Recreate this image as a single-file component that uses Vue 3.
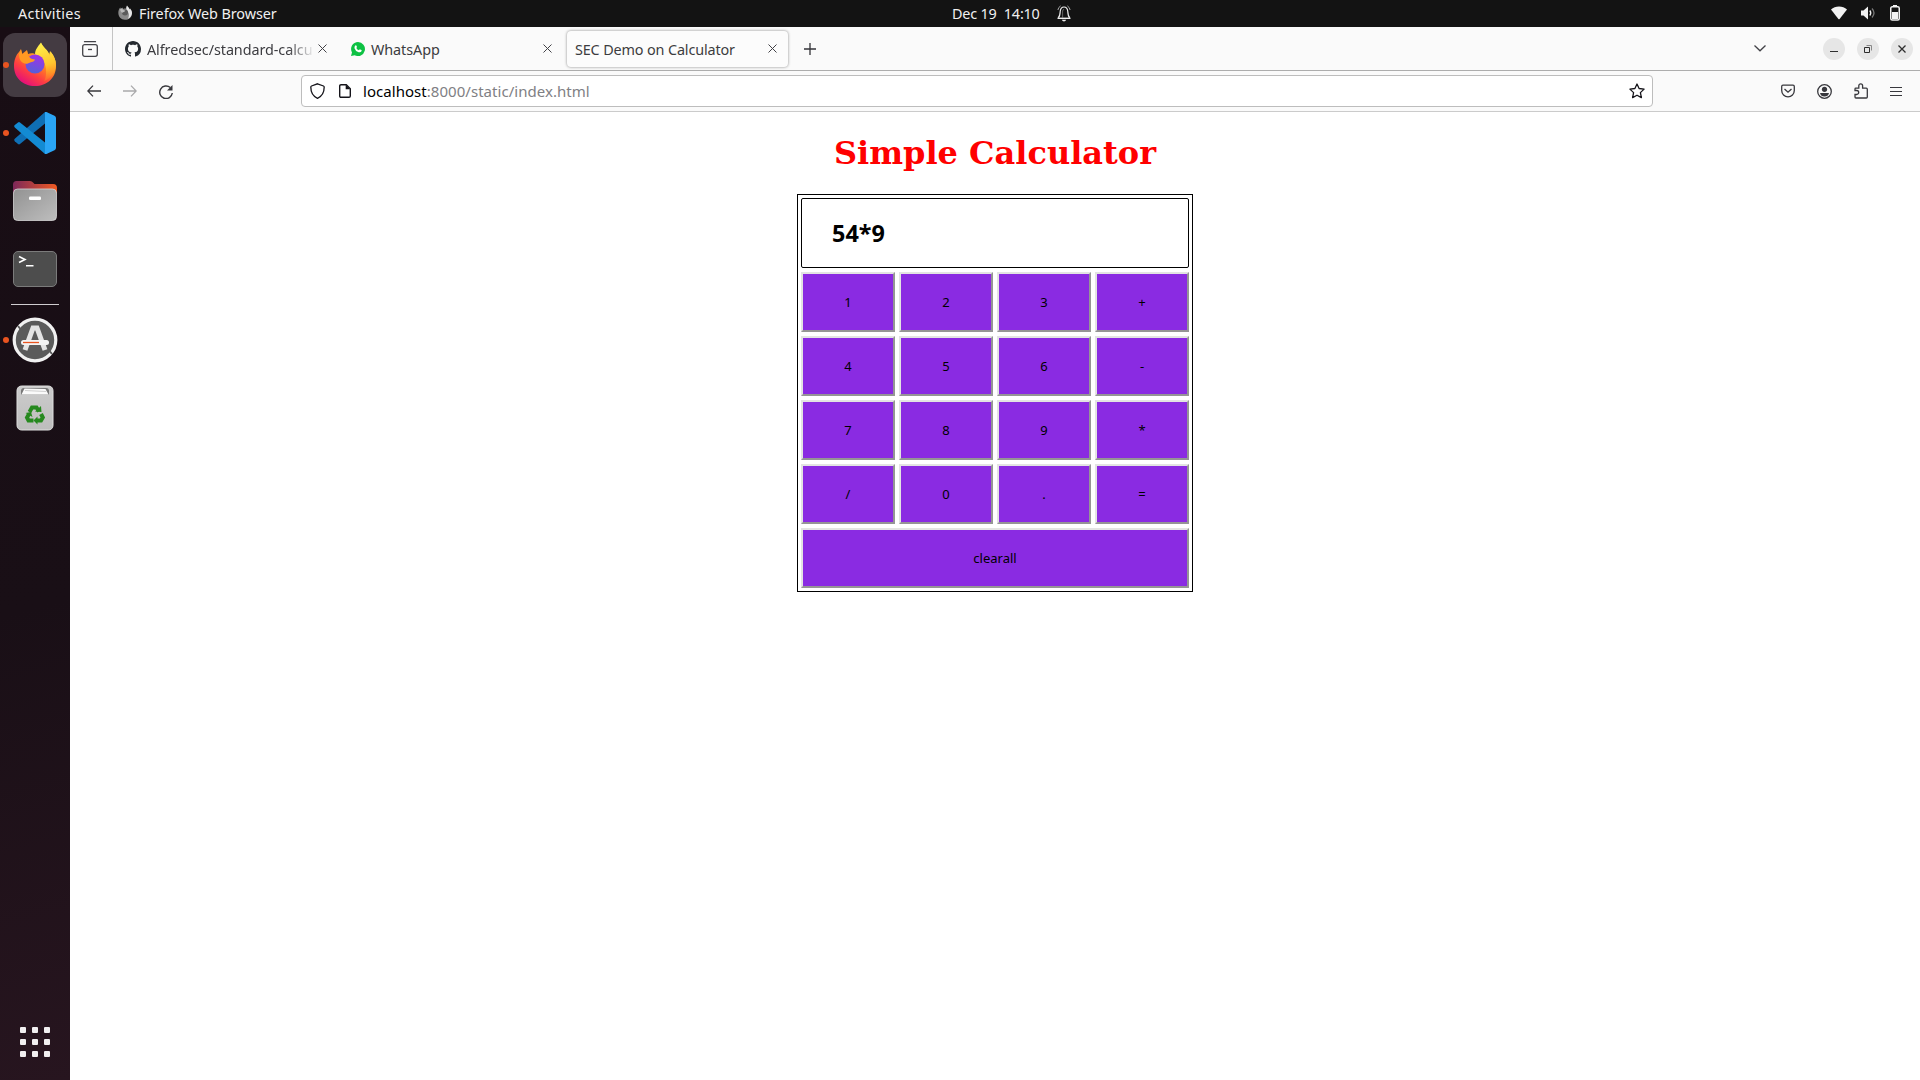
<script setup>
import { ref } from 'vue'

const display = ref('54*9')
const keys = ['1', '2', '3', '+', '4', '5', '6', '-', '7', '8', '9', '*', '/', '0', '.', '=']

function press(key) {
  display.value += key
}
function clearAll() {
  display.value = ''
}
</script>

<template>
  <div class="desktop">
    <header class="topbar">
      <span class="activities">Activities</span>
      <svg class="app-icon" width="14" height="15" viewBox="0 0 42 44">
        <path fill="#8b8b8b" d="M1 23C1 17 3 12 6 8l1-1 1 5 5-5 1 5c3-2 6-2 9-1l4-10c2 5 6 6 8 12l1-3c4 5 6 9 6 14 0 12-9 20-21 20S1 35 1 23z" />
        <path fill="#e6e6e6" d="M27 1c2 5 6 6 8 12l1-3c4 5 6 9 6 14-1 8-6 14-12 17 4-9 4-17-1-22-4-4-5-10-2-18z" />
        <circle cx="21" cy="22" r="9" fill="#5b5b5b" />
        <path fill="#b9b9b9" d="M6 8l2 4 5-4 1 5c3 2 5 3 8 3-2 5-7 4-8 7-4 0-8-5-8-15z" />
      </svg>
      <span class="app-name">Firefox Web Browser</span>
      <div class="clock">
        <span class="clock-text">Dec 19&nbsp; 14:10</span>
        <svg class="bell" width="14" height="17" viewBox="0 0 14 17" fill="none" stroke="#eee" stroke-width="1.2">
          <path d="M1.200 12.800C3 11.500 3 9.500 3.200 6.500 3.500 3.500 5 2 7 2s3.500 1.500 3.800 4.500c.2 3 .2 5 2 6.300" />
          <path d="M5.600 12.500V6q.2-1.600 1.400-1.600" stroke="#777" stroke-width=".8" />
          <path d="M3.600.9Q1.300 2.300.9 5M10.400.9q2.300 1.400 2.700 4.100" stroke="#aaa" stroke-width="1" />
          <path d="M.5 13.300h13" stroke-width="1.400" />
          <path d="M4.800 14.700h4.400q-.6 1.800-2.200 1.800t-2.200-1.800z" fill="#eee" stroke="none" />
        </svg>
      </div>
      <div class="status">
        <svg width="16" height="14" viewBox="0 0 16 14"><path d="M0 3.500C4-.5 12-.5 16 3.500L8.600 13q-.6.6-1.200 0z" fill="#f2f2f2" /></svg>
        <svg width="15" height="14" viewBox="0 0 15 14" fill="none">
          <path d="M0 4.500h2.500L7 .5v13L2.500 9.500H0z" fill="#f2f2f2" />
          <path d="M8.800 4.500q2 2.500 0 5" stroke="#f2f2f2" stroke-width="1.300" />
          <path d="M11 2.500q4 4.500 0 9" stroke="#777" stroke-width="1.300" />
        </svg>
        <svg width="10" height="16" viewBox="0 0 10 16">
          <path d="M3 0h4v2H3z" fill="#f2f2f2" />
          <rect x=".75" y="1.750" width="8.500" height="13.300" rx="1.500" fill="none" stroke="#f2f2f2" stroke-width="1.500" />
          <path d="M2 7h6v7H2z" fill="#f2f2f2" />
        </svg>
      </div>
    </header>

    <div class="body">
      <nav class="dock">
        <div class="dock-item active running">
          <svg class="firefox" width="42" height="44" viewBox="0 0 42 44">
            <defs>
              <linearGradient id="fxBody" x1=".8" y1=".1" x2=".25" y2=".95">
                <stop offset="0" stop-color="#ffd83a" />
                <stop offset=".4" stop-color="#ff8a1f" />
                <stop offset=".7" stop-color="#ff4040" />
                <stop offset="1" stop-color="#e4107a" />
              </linearGradient>
              <linearGradient id="fxTail" x1=".3" y1="0" x2=".5" y2="1">
                <stop offset="0" stop-color="#fff24c" />
                <stop offset=".6" stop-color="#ffc52e" />
                <stop offset="1" stop-color="#ff8a26" stop-opacity=".3" />
              </linearGradient>
              <linearGradient id="fxGlobe" x1=".7" y1="0" x2=".4" y2="1">
                <stop offset="0" stop-color="#a42fe8" />
                <stop offset="1" stop-color="#5460d8" />
              </linearGradient>
            </defs>
            <path fill="url(#fxBody)" d="M0 24C0 18 2 13 5 10l2-3 1 5 5-4 1 4c3-1 6-1 9 1L27 1c2 5 6 6 8 12l1-4c4 5 6 9 6 15 0 12-9 20-21 20S0 36 0 24z" />
            <path fill="url(#fxTail)" d="M27 .5c2 5 7 7 9 13l.5-4c4 5 5.500 9 5.500 14-1 8-5 12-12 16 3-5 3-15-1-21-2-3-4-5-8-6 0-5 3-8 6-12z" />
            <circle cx="21" cy="22" r="9.500" fill="url(#fxGlobe)" />
            <path fill="#ff9a22" d="M5 12l2-4.500 1.500 5L13 9l1 4.500c2 2.500 3 3.500 7 4-1 3-5 2.500-7 4-5 1-9-2-9-9.500z" />
          </svg>
        </div>
        <div class="dock-item running">
          <svg width="42" height="42" viewBox="0 0 42 42">
            <path d="M31 0v11.500L6 32q-1 .8-2 0L.8 29.200q-1.200-1.200 0-2.400z" fill="#0f6fb5" />
            <path d="M31 42V30.500L6 10.500q-1-.8-2 0L.8 13q-1.200 1.200 0 2.400z" fill="#138bd3" />
            <path d="M31 0v42q1.500.3 3-.7l6.500-3q1.500-.8 1.500-2.300V6q0-1.500-1.500-2.300L34 .7q-1.500-1-3-.7z" fill="#2aa5f5" />
          </svg>
        </div>
        <div class="dock-item">
          <svg width="44" height="40" viewBox="0 0 44 40">
            <defs>
              <linearGradient id="folderBack"><stop offset="0" stop-color="#7c2859" /><stop offset="1" stop-color="#f05a22" /></linearGradient>
              <linearGradient id="folderFront" x2="1" y2="1"><stop offset="0" stop-color="#929292" /><stop offset="1" stop-color="#bebebe" /></linearGradient>
            </defs>
            <path d="M0 12V3.500Q0 0 3.500 0H17q2 0 3 1.500L21.500 3H40q4 0 4 4v5z" fill="url(#folderBack)" />
            <rect x=".5" y="8" width="43" height="31.500" rx="4" fill="url(#folderFront)" stroke="#d5d5d5" stroke-width=".8" />
            <rect x="16" y="15.500" width="12" height="3.500" rx="1.300" fill="#fff" />
          </svg>
        </div>
        <div class="dock-item">
          <svg width="44" height="36" viewBox="0 0 44 36">
            <rect x=".5" y=".5" width="43" height="35" rx="4.500" fill="#4d4d4d" stroke="#7b7b7b" />
            <path d="m6 5.500 6 3-6 3M13 14.700h7.500" fill="none" stroke="#fff" stroke-width="1.600" />
          </svg>
        </div>
        <div class="dock-separator"></div>
        <div class="dock-item running software">
          <svg width="46" height="46" viewBox="0 0 46 46">
            <circle cx="23" cy="23" r="21.500" fill="#5b5b5b" />
            <circle cx="23" cy="23" r="20.800" fill="none" stroke="#f1f1f1" stroke-width="3.200" />
            <path d="m6 9 4 5M40 37l-4-5" stroke="#5b5b5b" stroke-width="2" />
            <path d="m13 33 8-22h4l8 22" fill="none" stroke="#e4e4e4" stroke-width="5" />
            <rect x="9" y="23" width="28" height="5" rx="2.500" fill="#f4f4f4" />
            <path d="M11 25.500h16" stroke="#e95420" stroke-width="1.300" />
          </svg>
        </div>
        <div class="dock-item trash">
          <svg width="38" height="46" viewBox="0 0 38 46">
            <defs><linearGradient id="bin" x2="0" y2="1"><stop offset="0" stop-color="#cccccc" /><stop offset="1" stop-color="#bdbdbd" /></linearGradient></defs>
            <rect x="1" y="1" width="36" height="44" rx="4.500" fill="url(#bin)" stroke="#dedede" />
            <path d="M5 9.500V6q0-3 3-3h22q3 0 3 3v3.500z" fill="#777" />
            <path d="m5.500 9.500 3-6 21 .5 3 5.500z" fill="#fafafa" />
            <path d="M9 5.500l21 1" stroke="#bbb" stroke-width=".7" />
            <g fill="none" stroke="#26891f" stroke-width="4">
              <path d="m13.500 27 2.500-4.500h4.500l2.500 4" />
              <path d="m25 29 1.800 3.500-1.800 3H21" />
              <path d="M17.500 35.500h-5l-1.500-3 2-3.500" />
            </g>
            <path d="m19 26.500 6.500.5-.5-6zM21.500 31.500l-4 4 4 4zM9.500 28l5.500-1 1.500 5z" fill="#26891f" />
          </svg>
        </div>
        <div class="app-grid"><i v-for="n in 9" :key="n"></i></div>
      </nav>

      <main class="browser">
        <div class="tabbar">
          <div class="view-button">
            <svg width="16" height="16" viewBox="0 0 16 16" fill="none" stroke="#424247" stroke-width="1.300">
              <path d="M2.500.7h11" stroke-linecap="round" /><rect x=".7" y="3.700" width="14.600" height="11.600" rx="2" /><path d="M6 8.500h4" />
            </svg>
          </div>
          <div class="tab tab-github">
            <svg class="favicon" width="16" height="16" viewBox="0 0 16 16"><path fill="#24292f" d="M8 0C3.580 0 0 3.580 0 8c0 3.540 2.290 6.530 5.470 7.590.4.070.55-.17.55-.38 0-.19-.01-.82-.01-1.490-2.010.37-2.530-.49-2.690-.94-.09-.23-.48-.94-.82-1.130-.28-.15-.68-.52-.01-.53.63-.01 1.080.58 1.230.82.72 1.210 1.870.87 2.330.66.07-.52.28-.87.51-1.070-1.780-.2-3.640-.89-3.640-3.950 0-.87.31-1.590.82-2.150-.08-.2-.36-1.020.08-2.120 0 0 .67-.21 2.200.82.64-.18 1.320-.27 2-.27s1.360.09 2 .27c1.530-1.040 2.200-.82 2.200-.82.44 1.100.16 1.920.08 2.120.51.56.82 1.270.82 2.150 0 3.070-1.870 3.750-3.650 3.950.29.25.54.73.54 1.480 0 1.070-.01 1.930-.01 2.200 0 .21.15.46.55.38A8.010 8.010 0 0 0 16 8c0-4.420-3.580-8-8-8z" /></svg>
            <span class="tab-title faded">Alfredsec/standard-calcu</span>
            <svg class="close" width="9" height="9" viewBox="0 0 9 9"><path d="m.5.5 8 8m0-8-8 8" stroke="#424247" stroke-width="1" /></svg>
          </div>
          <div class="tab tab-whatsapp">
            <svg class="favicon" width="14" height="14" viewBox="0 0 14 14">
              <path d="M7 0a7 7 0 1 1-3.300 13.200L0 14l1-3.500A7 7 0 0 1 7 0z" fill="#0dc143" />
              <path d="M4.300 3.400q.8-.6 1.200.3l.5 1.200-.7 1q.9 1.700 2.600 2.400l.9-1 1.600.8q.5.3.2 1-.9 1.700-3 1.100Q4.300 9.100 3.500 6.200q-.3-1.800.8-2.800z" fill="#fff" />
            </svg>
            <span class="tab-title">WhatsApp</span>
            <svg class="close" width="9" height="9" viewBox="0 0 9 9"><path d="m.5.5 8 8m0-8-8 8" stroke="#424247" stroke-width="1" /></svg>
          </div>
          <div class="tab tab-active">
            <span class="tab-title sec">SEC Demo on Calculator</span>
            <svg class="close" width="9" height="9" viewBox="0 0 9 9"><path d="m.5.5 8 8m0-8-8 8" stroke="#424247" stroke-width="1" /></svg>
          </div>
          <svg class="new-tab" width="12" height="12" viewBox="0 0 12 12"><path d="M6 0v12M0 6h12" stroke="#333338" stroke-width="1.300" /></svg>
          <div class="window-tools">
            <svg width="12" height="7" viewBox="0 0 12 7"><path d="m.5.5 5.500 5.300L11.500.5" fill="none" stroke="#424247" stroke-width="1.300" /></svg>
            <div class="window-buttons">
              <span class="wbtn"><svg width="10" height="10" viewBox="0 0 10 10"><path d="M1 7.500h8" stroke="#2e2e2e" /></svg></span>
              <span class="wbtn"><svg width="10" height="10" viewBox="0 0 10 10" fill="none"><path d="M3.500 1.500h5v5" stroke="#888" /><path d="M1.500 3.500h5v5h-5z" stroke="#2e2e2e" /></svg></span>
              <span class="wbtn"><svg width="10" height="10" viewBox="0 0 10 10"><path d="m1.500 1.500 7 7m0-7-7 7" stroke="#2e2e2e" stroke-width="1.300" /></svg></span>
            </div>
          </div>
        </div>

        <div class="navbar">
          <div class="nav-buttons">
            <svg width="14" height="12" viewBox="0 0 14 12" fill="none" stroke="#38383d" stroke-width="1.300"><path d="M14 6H1M6 .6.8 6 6 11.400" /></svg>
            <svg width="14" height="12" viewBox="0 0 14 12" fill="none" stroke="#a9a9ab" stroke-width="1.300"><path d="M0 6h13M8 .6 13.200 6 8 11.400" /></svg>
            <svg class="reload" width="14" height="14" viewBox="0 0 14 14"><path d="M11.300 2.600A6.300 6.300 0 1 0 13.300 8" fill="none" stroke="#38383d" stroke-width="1.400" /><path d="M13.500 0v5.500H8z" fill="#38383d" /></svg>
          </div>
          <div class="urlbar">
            <svg class="shield" width="15" height="16" viewBox="0 0 15 16"><path d="M7.500.8 13.500 3q.7.300.7 1c0 5.500-2.200 9.300-6.700 11.300C3 13.300.8 9.500.8 4q0-.7.7-1z" fill="none" stroke="#15141a" stroke-width="1.300" /></svg>
            <svg class="page" width="12" height="14" viewBox="0 0 12 14"><path d="M.7 2q0-1.300 1.300-1.300h5.300l4 4V12q0 1.300-1.300 1.300H2Q.7 13.300.7 12z" fill="none" stroke="#15141a" stroke-width="1.400" /><path d="M6.700.7v4.600h4.600z" fill="#15141a" /></svg>
            <span class="url"><b>localhost</b>:8000/static/index.html</span>
            <svg class="star" width="16" height="16" viewBox="0 0 16 16"><path d="m8 1 2.100 4.500 5 .6-3.700 3.500 1 5L8 12.200l-4.400 2.400 1-5L.9 6.100l5-.6z" fill="none" stroke="#15141a" stroke-width="1.300" stroke-linejoin="round" /></svg>
          </div>
          <div class="nav-tools">
            <svg width="14" height="14" viewBox="0 0 14 14" fill="none" stroke="#38383d" stroke-width="1.300"><path d="M2 1.200h10q1.300 0 1.300 1.300V6.500a6.300 6.300 0 0 1-12.600 0V2.500Q.7 1.200 2 1.200z" /><path d="m3.500 5 3.500 3.200L10.500 5" /></svg>
            <svg width="15" height="15" viewBox="0 0 15 15"><circle cx="7.500" cy="7.500" r="6.800" fill="none" stroke="#38383d" stroke-width="1.300" /><circle cx="7.500" cy="5.300" r="2.600" fill="#38383d" /><path d="M3 9h9q-.8 3.500-4.500 3.500T3 9z" fill="#38383d" /></svg>
            <svg width="14" height="16" viewBox="0 0 14 16"><path d="M1 7.500V6q0-.8.8-.8h3V2.700a1.900 1.900 0 0 1 3.800 0v2.500h3.700q1 0 1 1V14q0 1-1 1H2q-1 0-1-1v-2.500h1.700a2 2 0 0 0 0-4z" fill="none" stroke="#38383d" stroke-width="1.300" /></svg>
            <svg width="12" height="11" viewBox="0 0 12 11"><path d="M0 1.500h12M0 5.500h12M0 9.500h12" stroke="#38383d" stroke-width="1.200" /></svg>
          </div>
        </div>

        <section class="page-content">
          <h1>Simple Calculator</h1>
          <div class="calculator">
            <div class="display">{{ display }}</div>
            <div class="keys">
              <button v-for="key in keys" :key="key" @click="press(key)">{{ key }}</button>
              <button class="clear" @click="clearAll">clearall</button>
            </div>
          </div>
        </section>
      </main>
    </div>
  </div>
</template>

<style>
body {
  margin: 0;
  overflow: hidden;
}
</style>

<style scoped>
* {
  box-sizing: border-box;
}
svg {
  display: block;
  flex: none;
}
.desktop {
  width: 1920px;
  height: 1080px;
  display: flex;
  flex-direction: column;
  font-family: "Noto Sans", "Open Sans", sans-serif;
  font-size: 14.4px;
  white-space: nowrap;
}
.topbar {
  height: 27px;
  flex: none;
  background: #131313;
  color: #f0f0f0;
  display: flex;
  align-items: center;
  padding-left: 18px;
}
.activities {
  width: 100px;
  letter-spacing: 0.3px;
}
.app-icon {
  margin-top: -2px;
}
.app-name {
  margin-left: 7px;
  letter-spacing: -0.08px;
  width: 813px;
}
.clock {
  display: flex;
  align-items: center;
}
.clock-text {
  width: 105px;
  letter-spacing: -0.18px;
}
.bell {
  margin-top: -1px;
}
.status {
  margin-left: auto;
  display: flex;
  align-items: center;
  gap: 14px;
  padding-right: 20px;
  margin-top: -1px;
}
.body {
  flex: 1;
  display: flex;
  min-height: 0;
}
.dock {
  width: 70px;
  flex: none;
  background: linear-gradient(165deg, #180d14 0%, #190f16 55%, #27151f 100%);
  display: flex;
  flex-direction: column;
  align-items: center;
  padding-top: 6px;
}
.dock-item {
  position: relative;
  width: 64px;
  height: 64px;
  margin-bottom: 4px;
  display: flex;
  align-items: center;
  justify-content: center;
  flex: none;
}
.dock-item.active {
  background: #443b42;
  border-radius: 12px;
}
.firefox {
  margin-bottom: 2px;
}
.dock-item.running::before {
  content: "";
  position: absolute;
  left: 0;
  top: 29px;
  width: 6px;
  height: 6px;
  border-radius: 50%;
  background: #e95420;
}
.dock-separator {
  width: 48px;
  height: 1px;
  background: #cfcccf;
  margin: -1px 0 3px;
  flex: none;
}
.app-grid {
  margin-top: auto;
  margin-bottom: 23px;
  display: grid;
  grid-template-columns: repeat(3, 6px);
  gap: 6px;
}
.app-grid i {
  height: 6px;
  border-radius: 1px;
  background: #f1eff0;
}
.browser {
  flex: 1;
  min-width: 0;
  display: flex;
  flex-direction: column;
  background: #fff;
}
.tabbar {
  height: 44px;
  flex: none;
  background: #fafafa;
  border-bottom: 1px solid #adadad;
  display: flex;
  align-items: center;
  color: #3c3c40;
}
.view-button {
  width: 43px;
  height: 43px;
  border-right: 1px solid #c4c4c4;
  display: flex;
  align-items: center;
  padding: 1px 0 0 12px;
}
.tab {
  height: 36px;
  display: flex;
  align-items: center;
}
.tab-github {
  width: 226px;
  padding: 0 12px 0 12px;
}
.tab-whatsapp {
  width: 228px;
  padding: 0 15px 0 12px;
}
.tab-active {
  width: 221px;
  padding: 0 11px 0 8px;
  border-radius: 4px;
  background: #fcfcfc;
  box-shadow: 0 0 3px rgba(0, 0, 0, 0.45);
}
.tab-title {
  margin-left: 6px;
  padding-top: 2px;
  letter-spacing: -0.08px;
}
.tab-title.sec {
  margin-left: 0;
  letter-spacing: -0.14px;
}
.tab-title.faded {
  width: 168px;
  overflow: hidden;
  -webkit-mask-image: linear-gradient(90deg, #000 84%, transparent 100%);
  mask-image: linear-gradient(90deg, #000 84%, transparent 100%);
}
.tab .close {
  margin-left: auto;
}
.tab-github .close {
  margin-left: 3px;
}
.new-tab {
  margin: 1px 0 0 16px;
}
.window-tools {
  margin-left: auto;
  display: flex;
  align-items: center;
  gap: 57px;
  padding-right: 7px;
}
.window-buttons {
  display: flex;
  gap: 12px;
}
.wbtn {
  width: 22px;
  height: 22px;
  border-radius: 50%;
  background: #e6e6e6;
  display: flex;
  align-items: center;
  justify-content: center;
}
.navbar {
  height: 41px;
  flex: none;
  background: #fafafa;
  border-bottom: 1px solid #cbcbcb;
  display: flex;
  align-items: center;
}
.nav-buttons {
  width: 231px;
  display: flex;
  align-items: center;
  gap: 22px;
  padding-left: 17px;
}
.reload {
  margin-top: 2px;
}
.urlbar {
  width: 1352px;
  height: 32px;
  background: #fff;
  border: 1px solid #bdbdbd;
  border-radius: 4px;
  display: flex;
  align-items: center;
  padding: 0 7px 0 8px;
  font-size: 15px;
  color: #808084;
}
.page {
  margin-left: 14px;
}
.url {
  margin-left: 12px;
  letter-spacing: 0.04px;
}
.url b {
  font-weight: 400;
  color: #000;
}
.star {
  margin-left: auto;
}
.nav-tools {
  margin-left: auto;
  padding-right: 18px;
  display: flex;
  align-items: center;
  gap: 22px;
}
.page-content {
  display: flex;
  flex-direction: column;
  align-items: center;
}
h1 {
  margin: 23px 0 22px;
  height: 37px;
  font: bold 32px/37px "DejaVu Serif", serif;
  color: #f00;
}
.calculator {
  width: 396px;
  height: 398px;
  border: 1px solid #000;
  padding: 3px;
}
.display {
  height: 70px;
  border: 1px solid #000;
  border-radius: 2px;
  padding-left: 30px;
  font-size: 23.4px;
  font-weight: 700;
  line-height: 68px;
  color: #000;
}
.keys {
  margin-top: 4px;
  display: grid;
  grid-template-columns: repeat(4, 94px);
  grid-auto-rows: 60px;
  gap: 4px;
}
.keys button {
  margin: 0;
  padding: 0;
  border: 2px solid;
  border-color: #e3e3e3 #959595 #959595 #e3e3e3;
  background: #8a2be2;
  color: #000;
  font: 13px "Noto Sans", sans-serif;
}
.keys .clear {
  grid-column: 1 / -1;
}
</style>
